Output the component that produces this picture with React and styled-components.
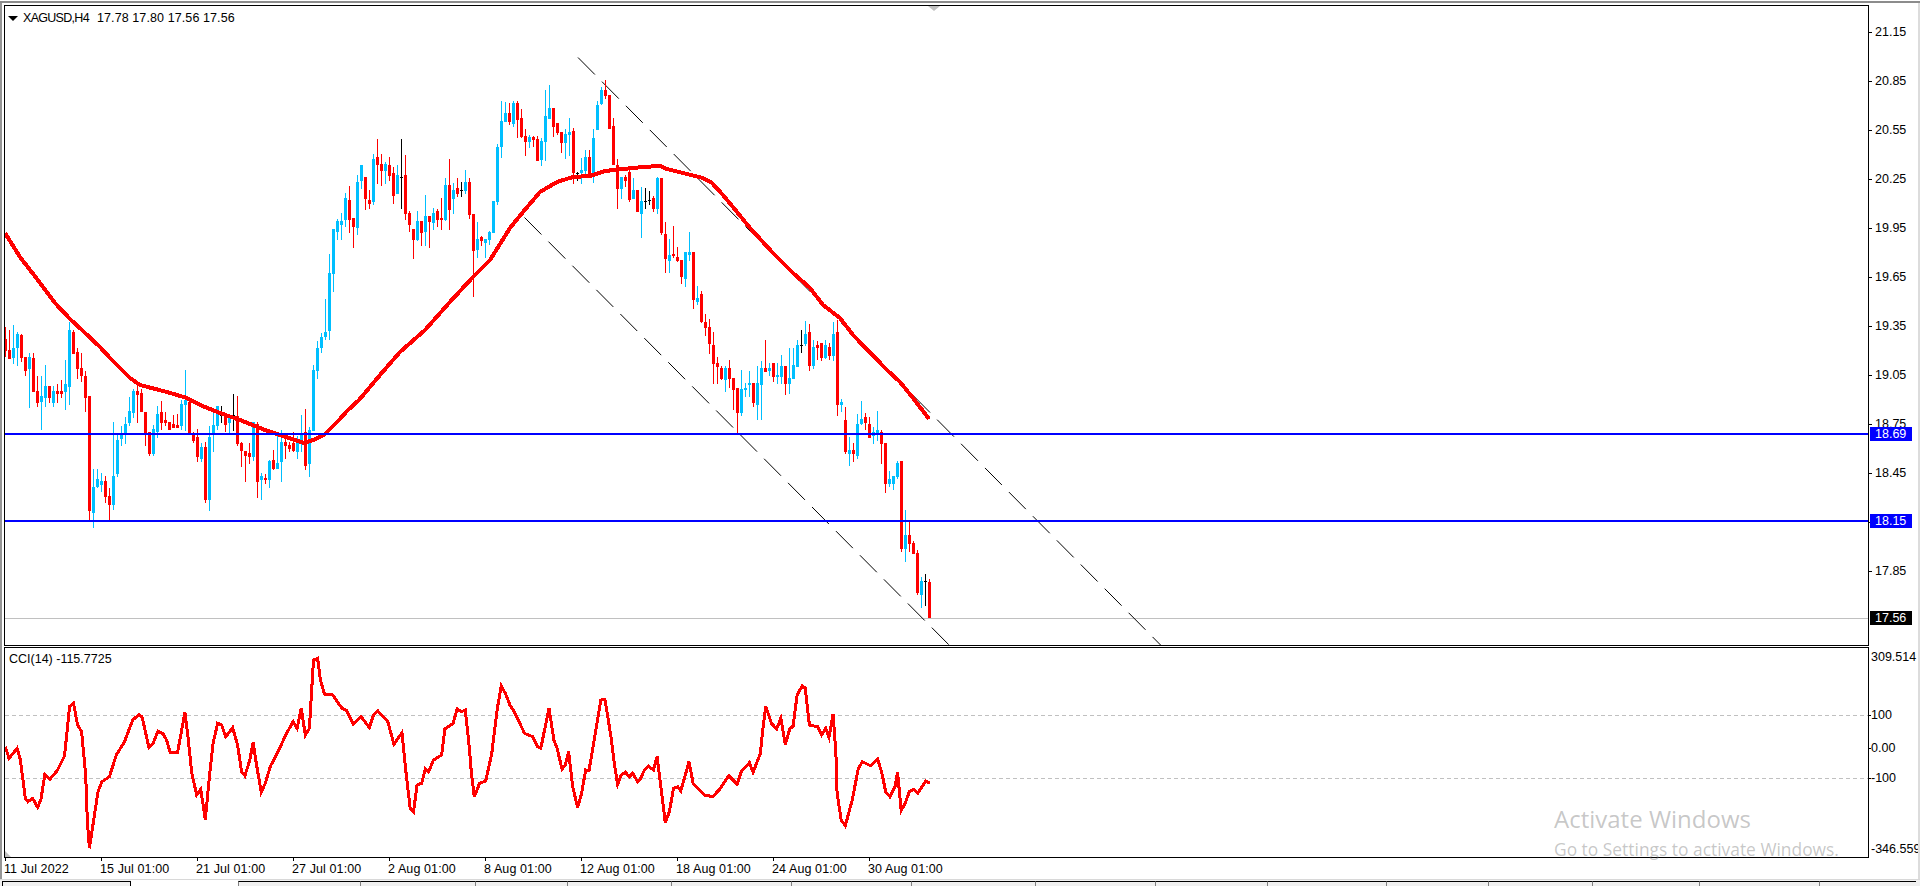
import styled, { createGlobalStyle } from 'styled-components'

// bar rows are [colour, bodyTop, bodyBottom, wickTop, wickBottom], y = y0 + value / 3
const segments = [
  { y0: 310, bars: [
    ['r',88,122,50,140],['r',120,147,60,147],['b',114,144,45,162],['b',72,114,66,168],['r',75,144,72,156],
    ['r',141,183,141,198],['b',141,177,129,294],['r',144,246,129,246],['r',243,279,198,291],['b',258,276,198,360],
    ['b',228,264,165,291],['r',228,264,228,279],['b',243,279,228,291],['r',243,252,222,279],['r',243,252,210,264],
    ['b',222,246,150,300],['b',60,231,36,285],['r',66,132,60,132],['r',126,177,114,207],['r',174,198,129,216],
    ['r',198,264,183,306],['r',258,603,258,630],['b',531,609,477,654],['b',507,531,477,534],['b',513,525,489,546],
    ['r',513,561,498,579],['r',558,585,534,630],['b',498,585,336,600],['b',390,492,372,501],['b',372,387,348,408],
    ['b',342,372,321,402],['b',303,339,261,348],['b',243,309,237,324],['r',243,255,228,339],['r',249,306,237,306],
    ['r',306,372,306,408],['r',366,432,366,438],['b',357,432,345,438],['b',312,366,288,384],['r',306,339,273,360],
    ['r',330,339,306,348],['r',336,360,336,360],['r',342,354,315,354],['r',345,354,312,354],['b',282,348,270,360],
    ['b',270,285,180,363],['r',276,375,270,375],['r',375,393,366,399],['r',381,441,357,456],['b',411,447,399,456],
    ['r',411,570,396,579],['b',381,570,349,603],['b',345,375,300,426],['b',288,348,288,360],['k',315,316,288,339],
    ['r',318,345,309,366],['b',315,339,312,372],['k',316,317,252,363],['r',318,402,258,408],
  ] },
  { y0: 360, bars: [
    ['r',250,273,246,321],['r',273,288,273,366],['r',279,291,249,312],['b',186,291,186,303],['r',192,366,186,414],
    ['b',348,360,339,420],['r',354,360,342,372],['b',303,360,300,384],['r',300,327,270,330],['b',309,327,228,327],
    ['b',246,306,210,366],['r',246,258,222,297],['r',255,267,246,276],['r',249,273,216,276],['b',249,276,228,297],
    ['b',225,249,165,276],['r',216,318,147,330],['b',210,312,201,351],['b',30,213,15,213],
  ] },
  { y0: 120, bars: [
    ['b',684,753,663,777],['b',651,684,639,699],['b',636,651,537,660],['b',459,633,402,660],['b',327,462,327,516],
    ['b',303,336,297,360],['b',303,315,279,360],['b',234,300,219,321],['r',240,300,198,339],['r',294,321,294,384],
    ['b',186,324,165,345],['b',135,183,135,207],['r',171,237,171,270],['r',240,252,210,267],['b',117,246,102,255],
    ['r',111,135,57,192],['r',132,153,102,198],['b',132,153,126,192],['r',135,168,111,183],['r',159,228,141,252],
    ['b',165,222,135,222],['k',171,172,57,267],['r',165,282,105,300],['r',279,315,273,336],['r',327,360,327,417],
    ['b',303,360,273,363],['r',303,339,303,378],['b',288,336,225,378],['r',288,306,288,384],['b',279,309,264,330],
    ['r',273,300,267,321],['r',294,300,234,330],['b',195,300,174,303],['r',195,270,117,330],['b',210,237,189,282],
    ['r',204,222,174,231],['k',210,211,186,231],['b',186,213,150,222],['r',186,285,174,297],['r',282,393,282,531],
    ['b',357,390,306,414],['r',351,363,348,378],['b',357,369,357,414],['b',336,360,333,375],['b',243,339,243,339],
    ['b',81,246,72,255],
  ] },
  { y0: 75, bars: [
    ['b',138,216,78,249],['b',114,141,81,141],['r',114,141,84,150],['b',84,147,78,156],['r',84,135,78,189],
    ['r',129,186,102,189],['r',183,201,162,243],['b',186,201,180,219],['r',186,195,183,216],['r',192,258,183,258],
    ['b',198,255,189,273],['b',123,201,45,258],['b',99,132,30,132],['r',99,156,99,186],['r',144,174,144,180],
    ['r',171,204,171,234],['b',177,204,162,252],['b',171,180,129,243],['r',168,294,160,327],['k',293,294,291,318],
    ['b',285,294,250,327],['b',246,288,225,300],['r',246,297,225,300],['b',189,294,162,324],['b',90,165,78,165],
    ['b',45,87,36,90],['r',45,63,15,72],['r',60,162,60,162],['r',153,270,129,270],['r',270,342,252,402],
    ['b',306,342,306,372],['r',306,318,300,336],['r',291,375,285,381],['b',345,372,309,372],['r',345,411,345,411],
    ['b',378,417,336,489],['k',378,379,339,402],['k',376,377,348,390],['r',369,402,363,411],['b',309,402,306,417],
    ['r',309,474,309,480],
  ] },
  { y0: 60, bars: [
    ['r',522,597,486,639],['b',585,603,537,639],['r',582,588,498,594],['r',591,603,561,606],['r',600,651,600,672],
    ['b',576,657,576,681],['b',576,585,516,603],['r',576,720,576,747],['b',714,726,678,735],
  ] },
  { y0: 300, bars: [
    ['r',-18,66,-27,69],['r',66,84,42,108],['r',81,132,57,162],['r',135,192,96,252],['r',189,201,171,252],
    ['r',204,237,198,240],['b',204,240,198,276],['r',204,237,180,264],['r',234,270,234,330],['r',264,339,264,399],
    ['b',267,339,210,348],['b',264,270,249,291],['b',249,255,213,291],['r',249,309,249,321],['b',249,315,198,360],
    ['b',204,255,183,360],['r',204,216,120,216],['b',204,213,189,228],['r',189,231,189,246],['b',225,231,189,252],
    ['b',198,231,165,252],['r',198,252,198,285],['b',234,252,144,282],['b',195,237,144,237],['b',135,201,120,201],
    ['k',135,136,90,159],['b',102,132,63,138],['r',96,198,72,213],['b',141,198,120,207],['r',135,144,123,180],
    ['r',129,174,129,183],['b',135,174,120,177],['r',141,168,129,180],['b',102,168,66,183],['r',96,315,60,348],
    ['b',306,315,297,336],['r',360,456,321,462],['b',450,462,411,498],['r',450,462,429,486],['b',372,468,342,477],
    ['b',357,372,303,375],['r',351,369,339,390],['r',372,414,351,414],['b',396,408,381,432],['b',390,402,333,423],
    ['r',396,432,390,492],['r',429,552,429,579],['b',537,552,513,561],['b',528,552,528,570],['b',489,531,483,537],
    ['r',483,747,483,756],['b',705,747,630,786],['r',705,732,663,756],['r',729,762,723,762],['r',759,879,750,885],
    ['b',843,885,831,924],['k',843,844,822,918],['r',846,955,837,955],
  ] },
]

const bars = segments.flatMap(({ y0, bars }) =>
  bars.map(([c, bt, bb, wt, wb]) => ({
    c,
    top: y0 + bt / 3,
    bottom: y0 + bb / 3,
    high: y0 + wt / 3,
    low: y0 + wb / 3,
  }))
)

const barColor = { r: '#ff0000', b: '#00bfff', k: '#000000' }

const maLine = '5,233 20,257 37,279 55,303 70,319 83,331 100,347 110,358 130,378 140,385 167,392 187,398 200,405 220,413 240,420 265,430 286,437 304,443 316,439 325,434 339,420 347,411 359,400 380,375 400,352 425,330 449,303 473,277 490,260 510,228 523,212 540,192 557,182 573,177 590,176 605,171 623,169 643,167 660,166 667,169 683,173 703,178 712,183 723,195 737,212 750,228 773,253 793,273 810,288 823,305 840,318 853,335 887,370 900,382 913,398 929,419'

// cci points: x is scaled by 2.45, y is y = 620 + value / 3
const cciLeft = [[13,380],[22,415],[42,385],[50,420],[62,535],[68,545],[80,535],[92,562],[100,540],[110,463],[122,478],[140,452],[158,408],[168,290],[170,260],[180,250],[190,315],[200,335],[210,465],[214,600],[219,685],[232,580],[240,515],[250,485],[268,470],[285,405],[305,365],[325,300],[340,284],[348,290],[365,383],[375,370],[387,333],[400,342],[408,360],[417,397],[435,397],[453,278],[460,345],[470,460],[482,525],[492,508],[503,600],[513,470],[522,370],[533,310],[543,315],[553,350],[570,323],[582,375],[592,455],[600,467],[612,420],[620,368],[628,430],[640,517],[650,490],[662,440],[685,385],[700,345],[718,305],[728,325],[738,265],[748,345],[758,325],[768,120],[778,115],[785,180],[795,222],[815,225],[838,265],[848,270],[865,312],[885,290],[905,323],[915,285],[925,272],[950,305],[965,373],[985,338],[995,460],[1005,565],[1013,575],[1022,495],[1033,490],[1042,447],[1050,455],[1062,420],[1082,405],[1090,327],[1110,310],[1120,267],[1130,275],[1140,270],[1150,385],[1155,460],[1162,530],[1175,490],[1190,483],[1205,400],[1218,270],[1228,198],[1238,220],[1250,257],[1260,275],[1285,340],[1305,350],[1317,380],[1325,385],[1345,265],[1357,360],[1365,385],[1377,447],[1385,435],[1393,395],[1403,500],[1415,563],[1425,520],[1435,450],[1443,452],[1465,290],[1472,240],[1482,238],[1497,350],[1505,430],[1513,493],[1522,465],[1532,457],[1542,470],[1550,460],[1562,485]]
const cciRight = [[0,480],[10,452],[20,438],[33,450],[42,410],[50,490],[62,608],[72,575],[82,505],[92,500],[100,513],[120,425],[130,490],[145,510],[158,525],[178,530],[195,508],[217,467],[238,492],[248,455],[268,428],[277,457],[295,400],[300,340],[308,258],[322,310],[335,327],[345,295],[356,373],[367,327],[375,318],[385,225],[398,197],[405,205],[415,315],[435,320],[445,345],[455,325],[463,352],[473,282],[480,400],[483,520],[493,600],[503,617],[520,540],[535,445],[545,425],[565,437],[582,418],[592,455],[602,515],[612,530],[625,500],[631,457],[640,572],[650,548],[660,515],[670,508],[680,520],[700,483],[710,490]]

const cciLine = [
  ...cciLeft.map(([x, y]) => [x / 2.45, 620 + y / 3]),
  ...cciRight.map(([x, y]) => [640 + x / 2.45, 620 + y / 3]),
].map(([x, y]) => `${x.toFixed(1)},${y.toFixed(1)}`).join(' ')

// 18.15 has no grey label, its blue tag sits on that row
const priceLabels = ['21.15','20.85','20.55','20.25','19.95','19.65','19.35','19.05','18.75','18.45','','17.85']
const cciLabels = [
  { text: '309.514', gap: 0, tick: false },
  { text: '100', gap: 40, tick: true },
  { text: '0.00', gap: 15, tick: true },
  { text: '-100', gap: 12, tick: true },
  { text: '-346.559', gap: 53, tick: false },
]
const timeLabels = ['11 Jul 2022','15 Jul 01:00','21 Jul 01:00','27 Jul 01:00','2 Aug 01:00','8 Aug 01:00','12 Aug 01:00','18 Aug 01:00','24 Aug 01:00','30 Aug 01:00']
const tabWidths = [122,115,92,104,120,120,124,120,112,119,102,104,107,120,97]

export default function App() {
  return (
    <>
      <GlobalStyle />
      <Page>
        <TopRule />
        <Frame>
          <MainPane>
            <Plot>
              <Legend>
                <LegendArrow />
                <LegendSymbol>XAGUSD,H4</LegendSymbol>
                <LegendPrices>17.78 17.80 17.56 17.56</LegendPrices>
              </Legend>
              <ShiftMarker />
              <ChartSvg viewBox="5 6 1863 639" width="1863" height="639">
                <line x1="5" y1="618" x2="1868" y2="618" stroke="#c0c0c0" shapeRendering="crispEdges" />
                <line x1="578" y1="57.5" x2="1168" y2="652.5" stroke="#000" strokeDasharray="24 10" />
                <line x1="524.5" y1="217.5" x2="958" y2="654" stroke="#000" strokeDasharray="24 10" />
                {bars.map((b, i) => (
                  <g key={i} fill={barColor[b.c]} shapeRendering="crispEdges">
                    <rect x={5 + 4 * i} y={b.high} width="1" height={b.low - b.high} />
                    <rect x={4 + 4 * i} y={b.top} width="3" height={Math.max(1, b.bottom - b.top)} />
                  </g>
                ))}
                <polyline points={maLine} fill="none" stroke="#ff0000" strokeWidth="4" shapeRendering="crispEdges" />
                <rect x="5" y="433" width="1863" height="2" fill="#0000ff" />
                <rect x="5" y="520" width="1863" height="2" fill="#0000ff" />
              </ChartSvg>
            </Plot>
            <PriceAxis>
              {priceLabels.map((p, i) => (
                <PriceRow key={i}>{p}</PriceRow>
              ))}
              <PriceTag $top={422} $bg="#0000ff">18.69</PriceTag>
              <PriceTag $top={509} $bg="#0000ff">18.15</PriceTag>
              <PriceTag $top={606} $bg="#000000">17.56</PriceTag>
            </PriceAxis>
          </MainPane>
          <CciPane>
            <Plot>
              <CciLegend>CCI(14) -115.7725</CciLegend>
              <CornerMark />
              <ChartSvg viewBox="5 648 1863 209" width="1863" height="209">
                <line x1="5" y1="715.5" x2="1868" y2="715.5" stroke="#c0c0c0" strokeDasharray="4 3" shapeRendering="crispEdges" />
                <line x1="5" y1="778.5" x2="1868" y2="778.5" stroke="#c0c0c0" strokeDasharray="4 3" shapeRendering="crispEdges" />
                <polyline points={cciLine} fill="none" stroke="#ff0000" strokeWidth="3" shapeRendering="crispEdges" />
              </ChartSvg>
            </Plot>
            <CciAxis>
              {cciLabels.map(l => (
                <CciRow key={l.text} $gap={l.gap} $tick={l.tick}>{l.text}</CciRow>
              ))}
            </CciAxis>
          </CciPane>
          <TimeAxis>
            {timeLabels.map(t => (
              <TimeCell key={t}>{t}</TimeCell>
            ))}
          </TimeAxis>
        </Frame>
        <TabStrip>
          <FirstTab />
          <ActiveTab />
          {tabWidths.map((w, i) => (
            <Tab key={i} $width={w} />
          ))}
        </TabStrip>
        <Watermark>
          <WatermarkTitle>Activate Windows</WatermarkTitle>
          <WatermarkText>Go to Settings to activate Windows.</WatermarkText>
        </Watermark>
      </Page>
    </>
  )
}

const GlobalStyle = createGlobalStyle`
  html, body {
    margin: 0;
    padding: 0;
    background: #ffffff;
    overflow: hidden;
  }
`

const Page = styled.div`
  position: relative;
  width: 1920px;
  height: 888px;
  display: flex;
  flex-direction: column;
  overflow: hidden;
  background: #ffffff;
  color: #000000;
  font-family: 'Liberation Sans', Arial, sans-serif;
  font-size: 12.5px;
`

const TopRule = styled.div`
  height: 2px;
  margin-top: 1px;
  flex: none;
  background: #8c8c8c;
`

const Frame = styled.div`
  flex: none;
  height: 876px;
  padding: 2px 0 0 2px;
  box-sizing: border-box;
  border-left: 2px solid #969696;
  border-right: 2px solid #dcdcdc;
  display: flex;
  flex-direction: column;
`

const MainPane = styled.div`
  flex: none;
  height: 641px;
  display: flex;
`

const CciPane = styled.div`
  flex: none;
  height: 211px;
  margin-top: 1px;
  display: flex;
`

const Plot = styled.div`
  position: relative;
  flex: none;
  width: 1863px;
  border: 1px solid #000000;
  overflow: hidden;
`

const ChartSvg = styled.svg`
  display: block;
`

const Legend = styled.div`
  position: absolute;
  left: 3px;
  top: 4px;
  display: flex;
  align-items: center;
  height: 16px;
  white-space: nowrap;
`

const LegendArrow = styled.span`
  width: 0;
  height: 0;
  margin-right: 5px;
  border-left: 5px solid transparent;
  border-right: 5px solid transparent;
  border-top: 5px solid #000000;
`

const LegendSymbol = styled.span`
  letter-spacing: -0.7px;
`

const LegendPrices = styled.span`
  margin-left: 8px;
  letter-spacing: 0.1px;
`

const CciLegend = styled.div`
  position: absolute;
  left: 4px;
  top: 3px;
  height: 16px;
  line-height: 16px;
  white-space: nowrap;
`

const ShiftMarker = styled.span`
  position: absolute;
  left: 923px;
  top: 0;
  width: 0;
  height: 0;
  border-left: 6px solid transparent;
  border-right: 6px solid transparent;
  border-top: 5px solid #c0c0c0;
`

const CornerMark = styled.span`
  position: absolute;
  left: 0;
  bottom: 0;
  width: 0;
  height: 0;
  border-bottom: 6px solid #c0c0c0;
  border-right: 6px solid transparent;
`

const PriceAxis = styled.div`
  position: relative;
  flex: 1;
  padding-top: 3px;
  margin-left: -1px;
  display: flex;
  flex-direction: column;
`

const PriceRow = styled.div`
  position: relative;
  flex: none;
  height: 49px;
  line-height: 49px;
  padding-left: 7px;

  &::before {
    content: '';
    position: absolute;
    left: 1px;
    top: 24px;
    width: 3px;
    height: 1px;
    background: #000000;
  }
`

const PriceTag = styled.div`
  position: absolute;
  left: 2px;
  top: ${p => p.$top}px;
  width: 42px;
  height: 14px;
  line-height: 14px;
  padding-left: 5px;
  box-sizing: border-box;
  background: ${p => p.$bg};
  color: #ffffff;
`

const CciAxis = styled.div`
  flex: 1;
  min-width: 0;
  margin-left: -1px;
  padding-top: 1px;
  display: flex;
  flex-direction: column;
  overflow: hidden;
`

const CciRow = styled.div`
  position: relative;
  flex: none;
  height: 18px;
  line-height: 18px;
  margin-top: ${p => p.$gap}px;
  padding-left: 3px;
  white-space: nowrap;

  &::before {
    content: '';
    display: ${p => (p.$tick ? 'block' : 'none')};
    position: absolute;
    left: 0;
    top: 9px;
    width: 3px;
    height: 1px;
    background: #000000;
  }
`

const TimeAxis = styled.div`
  flex: none;
  height: 23px;
  display: flex;
`

const TimeCell = styled.div`
  position: relative;
  flex: none;
  width: 96px;
  line-height: 23px;
  letter-spacing: 0.1px;
  white-space: nowrap;

  &::before {
    content: '';
    position: absolute;
    left: 1px;
    top: 0;
    width: 1px;
    height: 3px;
    background: #000000;
  }
`

const TabStrip = styled.div`
  flex: none;
  height: 7px;
  padding-left: 2px;
  border-top: 1px solid #d8d8d8;
  display: flex;
  align-items: flex-end;
  background: #f0f0f0;
  box-sizing: border-box;
`

const FirstTab = styled.div`
  flex: none;
  width: 129px;
  height: 5px;
  box-sizing: border-box;
  border: 1px solid #000000;
  border-bottom: none;
  background: #f0f0f0;
`

const ActiveTab = styled.div`
  flex: none;
  width: 107px;
  height: 6px;
  background: #ffffff;
`

const Tab = styled.div`
  flex: none;
  width: ${p => p.$width}px;
  height: 5px;
  box-sizing: border-box;
  border-top: 1px solid #000000;
  border-left: 1px solid #808080;
`

const Watermark = styled.div`
  position: absolute;
  left: 1554px;
  top: 803px;
  color: rgba(120, 120, 120, 0.42);
  font-family: 'Open Sans', sans-serif;
  white-space: nowrap;
  pointer-events: none;
`

const WatermarkTitle = styled.div`
  font-size: 24px;
  line-height: 32px;
`

const WatermarkText = styled.div`
  font-size: 17.4px;
  line-height: 22px;
  margin-top: 3px;
`
